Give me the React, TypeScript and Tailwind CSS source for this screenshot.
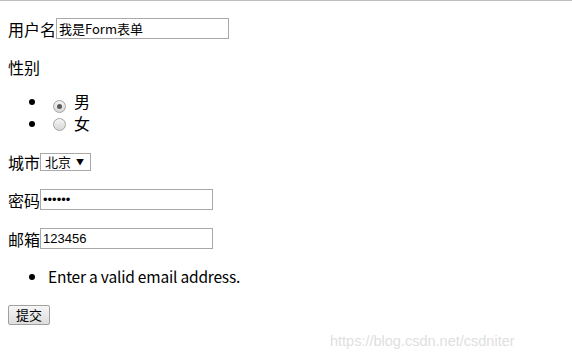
const font = { fontFamily: '"Noto Sans CJK SC", "Noto Sans", sans-serif' };

function Radio({ checked }: { checked?: boolean }) {
  return (
    <span className="ml-[5px] mr-[3px] inline-flex h-[13px] w-[13px] items-center justify-center rounded-full border border-[#a3a3a3] bg-gradient-to-b from-[#f4f4f4] to-[#d8d8d8] align-[-1px]">
      {checked && <span className="h-[5px] w-[5px] rounded-full bg-[#5a5a5a]" />}
    </span>
  );
}

function Field({ w, children }: { w: string; children?: React.ReactNode }) {
  return (
    <span className={`flex h-[21px] items-center border border-[#a9a9a9] bg-white pl-[2px] text-[13px] text-black ${w}`}>
      {children}
    </span>
  );
}

export default function App() {
  return (
    <div className="relative min-h-[355px] w-[572px] bg-white text-[16px] text-black" style={font}>
      <div className="h-px w-full bg-[#bfbfbf]" />
      <form className="px-2">
        <div className="mt-4 flex h-[23px] items-center">
          <span>用户名</span>
          <Field w="w-[173px]">我是Form表单</Field>
        </div>

        <div className="mt-4 flex h-[21px] items-center">性别</div>

        <ul className="mt-[13px] list-disc pl-10">
          <li className="h-[22px] leading-[22px]">
            <Radio checked />
            <span className="ml-[5px] inline-block h-[22px] leading-[22px]">男</span>
          </li>
          <li className="h-[22px] leading-[22px]">
            <Radio />
            <span className="ml-[5px] inline-block h-[22px] leading-[22px]">女</span>
          </li>
        </ul>

        <div className="mt-[17px] flex h-[21px] items-center">
          <span>城市</span>
          <span className="flex h-[18px] w-[51px] items-center justify-between border border-[#a9a9a9] pl-[4px] pr-[6px] text-[13px]">
            <span>北京</span>
            <span className="text-[8px]">▼</span>
          </span>
        </div>

        <div className="mt-4 flex h-[23px] items-center">
          <span>密码</span>
          <Field w="w-[173px]">
            <span className="text-[13px] leading-none" style={{ fontFamily: '"Liberation Sans", sans-serif' }}>••••••</span>
          </Field>
        </div>

        <div className="mt-4 flex h-[23px] items-center">
          <span>邮箱</span>
          <Field w="w-[173px]">
            <span style={{ fontFamily: '"Liberation Sans", sans-serif' }}>123456</span>
          </Field>
        </div>

        <ul className="mt-4 list-disc pl-10">
          <li className="text-[15.5px] leading-[21px] tracking-[-0.2px]">Enter a valid email address.</li>
        </ul>

        <div className="mt-4 flex h-[23px] items-center">
          <button
            type="button"
            className="flex h-[20px] w-[42px] items-center justify-center rounded-[2px] border border-[#a0a0a0] bg-gradient-to-b from-[#f6f6f6] to-[#dddddd] text-[13px]"
          >
            提交
          </button>
        </div>
      </form>

      <span
        className="absolute left-[330px] top-[331px] text-[14.5px] text-[#e0e0e0]"
        style={{ fontFamily: '"Liberation Sans", sans-serif' }}
      >
        https://blog.csdn.net/csdniter
      </span>
    </div>
  );
}
